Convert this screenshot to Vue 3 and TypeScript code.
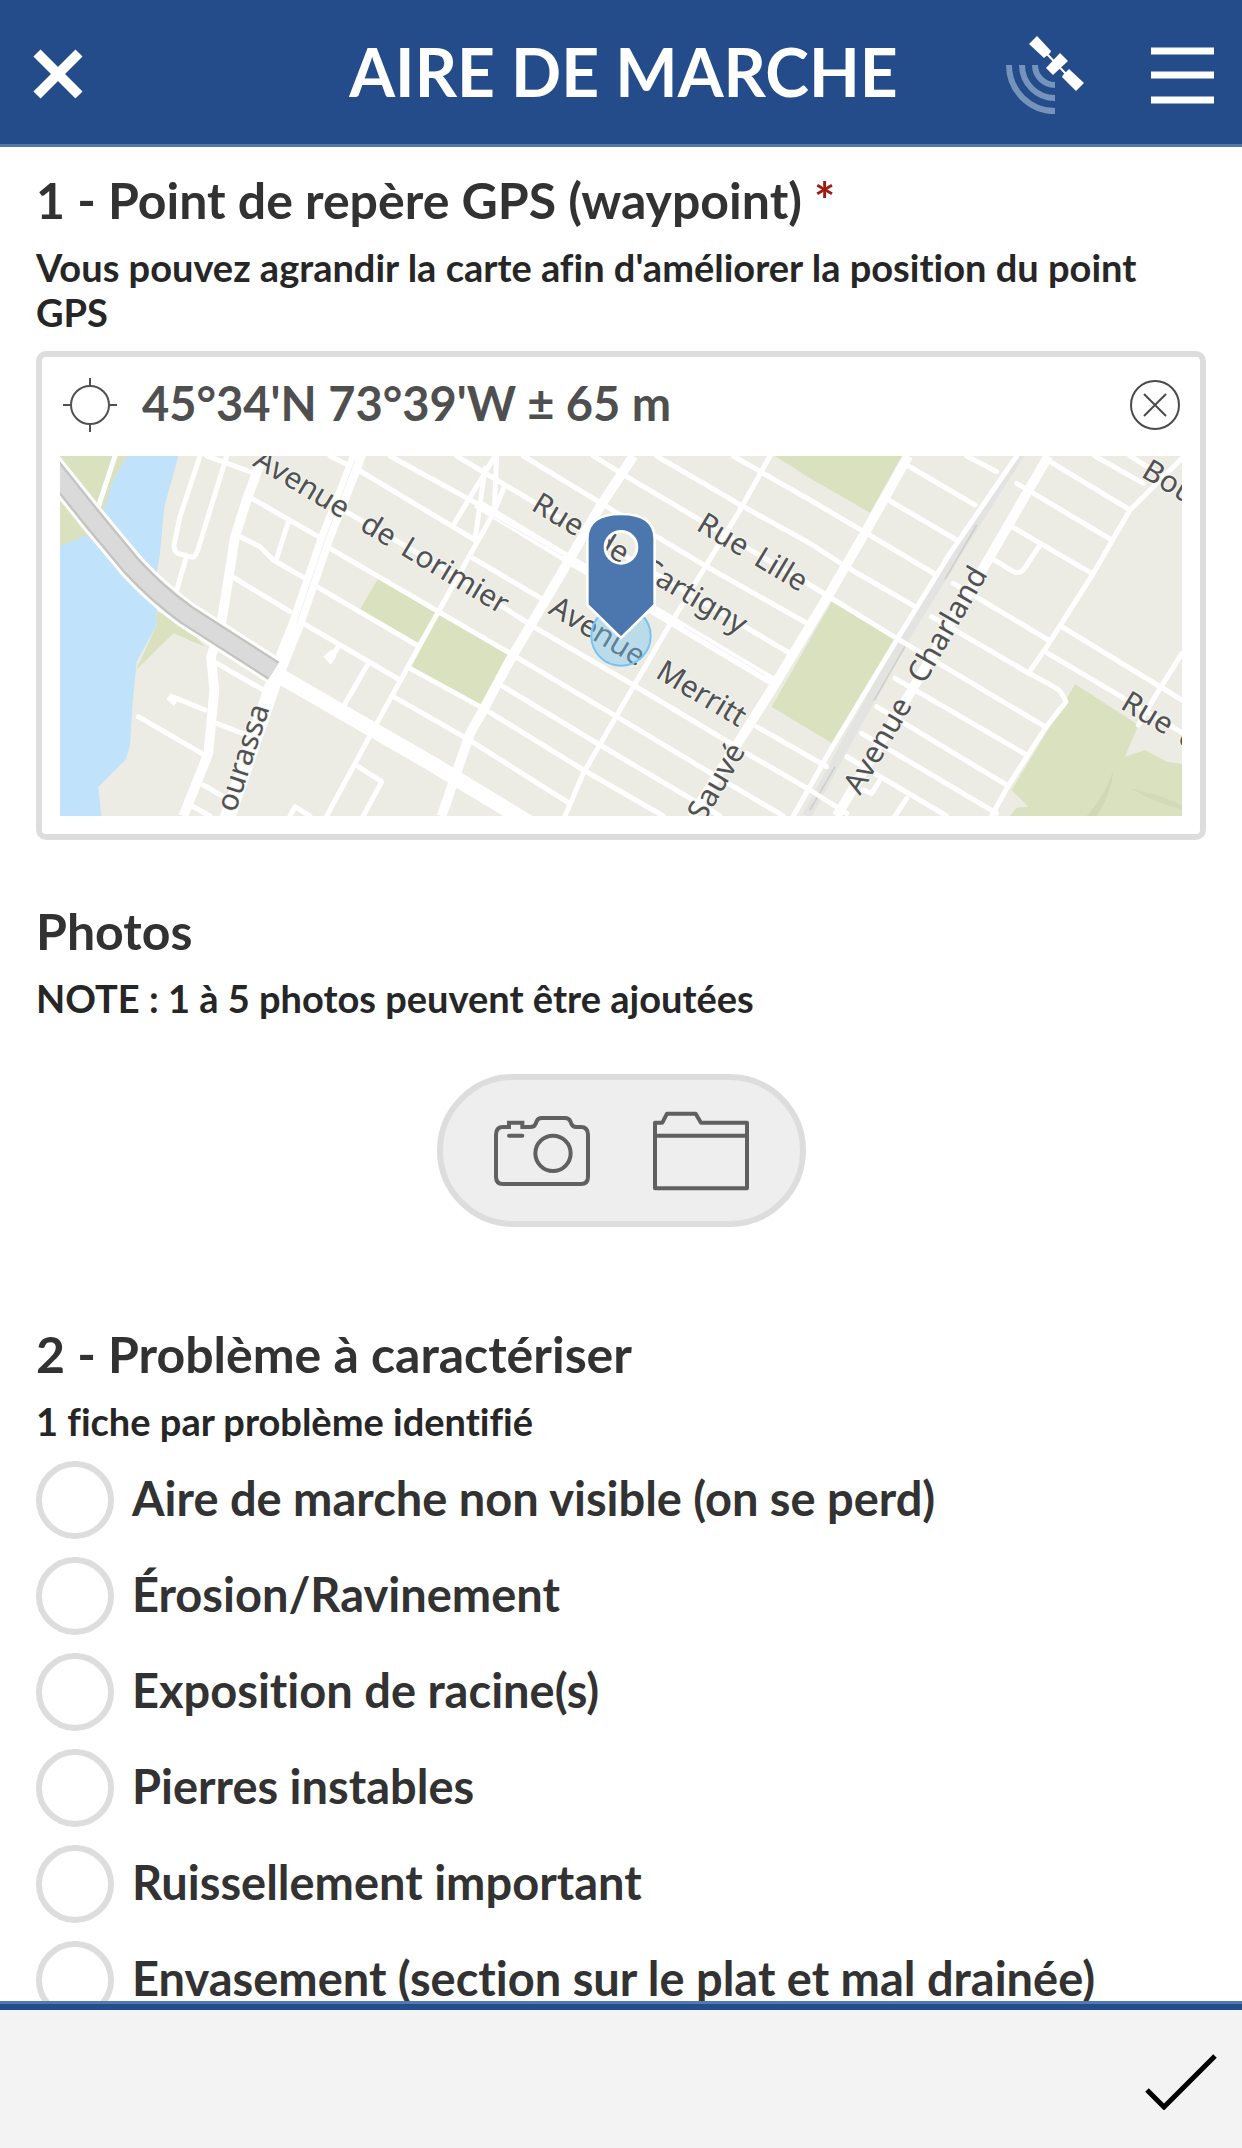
<script setup lang="ts">
import { ref } from 'vue'

interface Word {
  text: string
  at: number
}

interface Label {
  words: Word[]
  x: number
  y: number
  angle: number
}

const problem = ref('')

const problems: string[] = [
  'Aire de marche non visible (on se perd)',
  'Érosion/Ravinement',
  'Exposition de racine(s)',
  'Pierres instables',
  'Ruissellement important',
  'Envasement (section sur le plat et mal drainée)',
]

const parks: string[] = [
  'M90,348 L290,348 L250,420 L218,520 L260,600 L290,710 L190,606 L170,585 L90,618Z',
  'M380,815 L380,855 L318,990 L430,880 L525,920 L440,830Z',
  'M1045,715 L1220,820 L1160,912 L990,808Z',
  'M1225,825 L1435,940 L1350,1095 L1145,980Z',
  'M2235,348 L2615,348 L2520,518 L2340,415Z',
  'M2405,785 L2598,900 L2415,1215 L2225,1100Z',
  'M3135,1032 L3325,1155 L3285,1250 L3345,1230 L3410,1265 L3456,1272 L3456,1428 L2940,1428 L2960,1403 L2995,1400 L2945,1350 L3105,1085Z',
]

const streets: string[] = [
  'M255,348 L205,500',
  'M510,348 L450,530 L432,615 Q432,640 450,642 L488,652 Q498,650 505,625 L590,348',
  'M468,655 L440,750',
  'M530,348 L660,395',
  'M665,475 L865,590',
  'M775,545 L740,655',
  'M630,590 L690,620 L730,660 L820,712',
  'M610,712 L780,815',
  'M900,625 L1440,940 L1760,1130 L2060,1310 L2260,1428',
  'M860,740 L1160,915',
  'M820,850 L1110,1020',
  'M1140,985 L1360,1105 L1660,1290 L1900,1428',
  'M1090,1070 L1310,1195 L1610,1385',
  'M905,490 L1225,675 L1510,860 L1810,1035 L2110,1215',
  'M985,390 L1335,600',
  'M1330,655 L1550,785',
  'M900,348 L960,378',
  'M1080,348 L1340,490',
  'M1420,1040 L1710,1215 L2070,1428',
  'M1280,348 L1610,545 L2280,940',
  'M1480,348 L1730,500 L2030,680 L2340,855',
  'M1690,348 L1790,410 L2340,735 L2600,895 L3045,1160',
  'M1880,348 L2140,500 L2340,610 L2440,675 L2655,800',
  'M2110,348 L2200,400 L2340,480 L2510,580 L2720,705',
  'M2575,480 L2780,600',
  'M2630,375 L2835,495',
  'M2810,348 L2900,395',
  'M3060,365 L3300,510',
  'M2960,430 L3245,600',
  'M2945,560 L3185,700',
  'M2885,655 L2950,695 Q2975,705 2990,675 L3030,615',
  'M2770,730 L3055,900',
  'M2705,830 L2980,990 L3080,1045 Q3095,1055 3108,1085 L3045,1165 L2930,1345 L2885,1428',
  'M2595,1015 L2990,1245',
  'M2540,1100 L2930,1335',
  'M2495,1180 L2900,1420',
  'M2450,1250 L2750,1428',
  'M2550,1320 L2525,1360 L2500,1350',
  'M2630,1375 L2595,1428',
  'M3195,348 L3340,430',
  'M3300,348 L3400,410',
  'M3095,860 L3456,1080',
  'M3045,935 L3456,1178',
  'M3456,355 L3300,510 L3190,700 L3050,920 L2995,1000',
  'M3456,940 L3390,1045 L3325,1155',
  'M2180,1160 L2390,1280',
  'M2150,1240 L2340,1350 L2450,1420',
  'M2220,348 L2130,510 L2020,690 L1910,870 L1810,1040 L1660,1300 L1605,1428',
  'M1425,435 L1390,520 L1320,645 L1225,815 L1200,860 L1040,1150 L890,1428',
  'M1395,348 L1270,555',
  'M1365,385 L1335,600',
  'M1400,348 L1393,510',
  'M440,1075 L525,1110',
  'M325,1130 L515,1240',
  'M560,970 L700,1050',
  'M560,1150 L650,1185',
  'M520,1335 L580,1370',
  'M490,1400 L540,1428',
  'M925,920 L902,955',
  'M1015,970 L940,1100',
  'M985,1280 L1055,1325 L1000,1428',
  'M780,1428 L795,1400 L840,1428',
  'M2960,348 L2760,640 L2600,900 L2410,1215 L2290,1428',
]

const avenues: string[] = [
  'M690,370 L650,480 L615,590 L590,750 L572,860 L543,950 L553,1050 L535,1240 L460,1428',
  'M1810,348 L1710,500 L1600,690 L1440,960 L1360,1110 L1320,1180 L1235,1428',
  'M2635,348 L2510,570 L2390,775 L2230,1040 L2120,1215 L1985,1428',
  'M3055,348 L2880,650 L2640,1060 L2420,1428',
  'M1340,490 L1620,660 L2230,1025',
]

// Each word carries its distance along the street from the label's start.
const labels: Label[] = [
  {
    words: [{ text: 'Avenue', at: 0 }, { text: 'de', at: 374 }, { text: 'Lorimier', at: 516 }],
    x: 665,
    y: 375,
    angle: 31,
  },
  {
    words: [{ text: 'Rue', at: 0 }, { text: 'de', at: 214 }, { text: 'Cartigny', at: 376 }],
    x: 1500,
    y: 508,
    angle: 31,
  },
  { words: [{ text: 'Rue', at: 0 }, { text: 'Lille', at: 200 }], x: 1995, y: 568, angle: 31 },
  { words: [{ text: 'Avenue', at: 0 }, { text: 'Merritt', at: 374 }], x: 1552, y: 818, angle: 31 },
  { words: [{ text: 'Avenue', at: 0 }, { text: 'Charland', at: 384 }], x: 2490, y: 1368, angle: -60 },
  { words: [{ text: 'ourassa', at: 0 }], x: 616, y: 1420, angle: -72 },
  { words: [{ text: 'Sauvé', at: 0 }], x: 2022, y: 1450, angle: -60 },
  { words: [{ text: 'Bou', at: 0 }], x: 3330, y: 408, angle: 31 },
  { words: [{ text: 'Rue', at: 0 }, { text: 'd', at: 200 }], x: 3268, y: 1103, angle: 31 },
]
</script>

<template>
  <div class="app">
    <header class="topbar">
      <button class="icon-button" type="button" aria-label="Fermer">
        <svg width="50" height="50" viewBox="0 0 50 50">
          <path d="M4 4 L46 46 M46 4 L4 46" stroke="#fff" stroke-width="10" fill="none" />
        </svg>
      </button>
      <h1 class="title">AIRE DE MARCHE</h1>
      <div class="tools">
        <button class="icon-button" type="button" aria-label="État GPS">
          <svg width="80" height="80" viewBox="0 0 80 80">
            <g fill="none" stroke="#7693bb" stroke-width="6">
              <path d="M4 30 A46 46 0 0 0 50 76" />
              <path d="M17 30 A33 33 0 0 0 50 63" />
              <path d="M30 30 A20 20 0 0 0 50 50" />
            </g>
            <g fill="#fff">
              <path d="M32 1 L46 16 L45 18 L39 23 L24 9Z" />
              <path d="M55 18 L63 26 L48 40 L41 33Z" />
              <path d="M64 34 L79 48 L71 56 L57 42 L58 40Z" />
            </g>
            <path d="M41 18 L62 40" stroke="#fff" stroke-width="2" />
          </svg>
        </button>
        <button class="icon-button" type="button" aria-label="Menu">
          <svg width="63" height="57" viewBox="0 0 63 57">
            <path d="M0 4 H63 M0 28 H63 M0 53 H63" stroke="#fff" stroke-width="7" />
          </svg>
        </button>
      </div>
    </header>

    <main class="form">
      <section class="question">
        <h2>1 - Point de repère GPS (waypoint) <span class="required">*</span></h2>
        <p class="hint">Vous pouvez agrandir la carte afin d'améliorer la position du point GPS</p>
        <div class="geo">
          <div class="geo-bar">
            <svg class="target" width="56" height="56" viewBox="0 0 56 56" fill="none" stroke="#505050" stroke-width="2">
              <circle cx="28" cy="28" r="19" />
              <path d="M28 1 V9 M28 47 V55 M1 28 H9 M47 28 H55" />
            </svg>
            <output class="coords">45°34'N 73°39'W ± 65 m</output>
            <button class="icon-button" type="button" aria-label="Effacer la position">
              <svg width="50" height="50" viewBox="0 0 50 50" fill="none" stroke="#4a4a4a" stroke-width="2">
                <circle cx="25" cy="25" r="24" />
                <path d="M14 14 L36 36 M36 14 L14 36" />
              </svg>
            </button>
          </div>
          <svg class="map" viewBox="90 348 3366 1080" preserveAspectRatio="xMidYMid slice" role="img" aria-label="Carte">
            <rect x="90" y="348" width="3366" height="1080" fill="#ecece4" />
            <path
              d="M290,348 L445,348 L403,500 L390,640 L380,700 L380,855 L320,965 L308,1090 L300,1215 L288,1258 L205,1340 L214,1428 L90,1428 L90,600 L215,520 L250,420Z"
              fill="#c0e3fb"
            />
            <path v-for="d in parks" :key="d" :d="d" fill="#d9e1bf" />
            <path d="M3250,1290 Q3245,1360 3200,1428 L3170,1428 Q3225,1370 3250,1290Z" fill="#d0d8b7" />
            <path d="M3300,1345 Q3370,1385 3456,1410 L3456,1396 Q3380,1360 3300,1345Z" fill="#d2dab9" />
            <path
              d="M2985,318 L2780,640 L2620,900 L2470,1170 L2330,1428"
              fill="none"
              stroke="#e3e3e2"
              stroke-width="28"
            />
            <path
              d="M2840,555 L2745,718 M2625,920 L2532,1082 M2415,1280 L2340,1410 M2965,348 L2955,358"
              fill="none"
              stroke="#d0cfcb"
              stroke-width="5"
            />
            <g fill="none" stroke="#fff" stroke-linejoin="round">
              <path v-for="d in streets" :key="d" :d="d" stroke-width="15" stroke-linecap="round" />
              <path v-for="d in avenues" :key="d" :d="d" stroke-width="29" />
              <path d="M990,330 L960,410 L885,600 L800,850 L740,1000 L590,1440" stroke-width="46" />
              <path d="M735,1000 L1200,1268 L1500,1450" stroke-width="46" />
            </g>
            <path d="M880,950 L905,928 L920,948 L902,974Z M410,1078 L422,1060 L450,1072 L432,1098Z" fill="#fff" />
            <path
              d="M975,360 L885,600 L800,850 M1390,530 L1600,648 M1960,860 L2210,1010"
              fill="none"
              stroke="#f1f1f1"
              stroke-width="3"
            />
            <g fill="none">
              <path d="M50,365 L190,540 L305,678 Q380,760 470,825 L728,990" stroke="#fff" stroke-width="82" />
              <path d="M50,365 L190,540 L305,678 Q380,760 470,825 L731,992" stroke="#c3c3c0" stroke-width="64" />
              <path d="M50,365 L190,540 L305,678 Q380,760 470,825 L731,992" stroke="#dadada" stroke-width="50" />
            </g>

            <text
              v-for="label in labels"
              :key="`${label.x}-${label.y}`"
              class="map-label"
              :transform="`translate(${label.x} ${label.y}) rotate(${label.angle})`"
            ><tspan v-for="word in label.words" :key="word.text" :x="word.at">{{ word.text + ' ' }}</tspan></text>

            <circle cx="1773" cy="888" r="89" fill="#75c4f3" fill-opacity="0.42" stroke="#79c3f1" stroke-width="6" />
            <path
              d="M1672,596 C1672,545 1712,522 1773,522 C1834,522 1874,545 1874,596 V795 L1773,894 L1672,795Z M1773,574 a48,48 0 1 0 0,96 a48,48 0 1 0 0,-96Z"
              fill="#4b76ae"
              fill-rule="evenodd"
              stroke="#fff"
              stroke-width="8"
            />
          </svg>
        </div>
      </section>

      <section class="question photos">
        <h2>Photos</h2>
        <p class="hint">NOTE : 1 à 5 photos peuvent être ajoutées</p>
        <div class="capture">
          <button class="icon-button" type="button" aria-label="Prendre une photo">
            <svg width="96" height="96" viewBox="225 157 288 288" fill="none" stroke="#606060" stroke-width="12">
              <path
                d="M270,229 H252 Q231,229 231,252 V378 Q231,400 252,400 H485 Q507,400 507,378 V252 Q507,229 485,229 H472 Q460,229 457,219 L454,212 Q450,202 438,202 H368 Q356,202 353,212 L350,219 Q346,229 334,229 H310 V216 H270Z"
              />
              <path d="M270,255 H310" stroke-linecap="round" />
              <circle cx="402" cy="308" r="53" />
            </svg>
          </button>
          <button class="icon-button" type="button" aria-label="Choisir un fichier">
            <svg width="96" height="96" viewBox="702 157 288 288" fill="none" stroke="#606060" stroke-width="12" stroke-linejoin="round">
              <path d="M708,216 H730 L744,189 H830 L846,216 H984 V413 H708Z M708,255 H984" />
            </svg>
          </button>
        </div>
      </section>

      <section class="question problems">
        <h2>2 - Problème à caractériser</h2>
        <p class="hint">1 fiche par problème identifié</p>
        <div class="choices" role="radiogroup" aria-label="Problème à caractériser">
          <label v-for="item in problems" :key="item" class="choice">
            <input v-model="problem" type="radio" name="problem" :value="item" />
            <span>{{ item }}</span>
          </label>
        </div>
      </section>
    </main>

    <footer class="bottombar">
      <button class="icon-button" type="button" aria-label="Valider">
        <svg width="72" height="56" viewBox="0 0 72 56">
          <path d="M2 36 L19 53 L70 2" fill="none" stroke="#000" stroke-width="5" />
        </svg>
      </button>
    </footer>
  </div>
</template>

<style>
body {
  margin: 0;
}
</style>

<style scoped>
.app {
  display: flex;
  flex-direction: column;
  height: 100vh;
  background: #fff;
  color: #323232;
  font-family: Lato, "Open Sans", sans-serif;
  font-weight: 700;
  font-variant-ligatures: none;
}

.icon-button {
  display: block;
  padding: 0;
  border: 0;
  background: none;
  cursor: pointer;
}

.icon-button svg {
  display: block;
}

.topbar {
  display: grid;
  grid-template-columns: 1fr auto 1fr;
  align-items: center;
  flex: none;
  box-sizing: border-box;
  height: 147px;
  padding: 3px 28px 0 33px;
  border-bottom: 3px solid #5677a9;
  background: #244c8b;
}

.title {
  margin: 0;
  padding-bottom: 4px;
  color: #fff;
  font-size: 66px;
  line-height: 80px;
  font-weight: 700;
}

.tools {
  display: flex;
  align-items: center;
  justify-content: flex-end;
  gap: 66px;
  padding-top: 3px;
}

.form {
  flex: 1;
  min-height: 0;
  overflow-y: auto;
  scrollbar-width: none;
  padding: 23px 36px 0;
}

h2 {
  margin: 0;
  font-size: 50px;
  line-height: 60px;
  font-weight: 700;
}

.required {
  color: #9c1c12;
}

.hint {
  margin: 15px 0 0;
  color: #262626;
  font-size: 38px;
  line-height: 45px;
}

.geo {
  margin-top: 16px;
  padding: 0 18px 18px;
  border: 6px solid #ddd;
  border-radius: 10px;
}

.geo-bar {
  display: flex;
  align-items: center;
  gap: 24px;
  box-sizing: border-box;
  height: 99px;
  padding: 0 2px 4px;
}

.target {
  flex: none;
}

.coords {
  flex: 1;
  padding-bottom: 4px;
  color: #4f4f4f;
  font-size: 47px;
  line-height: 60px;
}

.map {
  display: block;
  width: 100%;
  height: 360px;
}

.map-label {
  font-family: "Noto Sans", sans-serif;
  font-size: 90px;
  font-weight: 400;
  fill: #505152;
  stroke: #f4f4ef;
  stroke-width: 6px;
  paint-order: stroke;
}

.photos {
  margin-top: 61px;
}

.capture {
  display: flex;
  align-items: center;
  justify-content: center;
  gap: 63px;
  box-sizing: border-box;
  width: fit-content;
  height: 153px;
  margin: 53px auto 0;
  padding: 0 51px;
  border: 6px solid #ddd;
  border-radius: 77px;
  background: #eee;
}

.problems {
  margin-top: 97px;
}

.choices {
  display: flex;
  flex-direction: column;
  gap: 18px;
  margin-top: 17px;
}

.choice {
  display: flex;
  align-items: center;
  gap: 18px;
  font-size: 47px;
  line-height: 60px;
  white-space: nowrap;
}

.choice span {
  padding-bottom: 4px;
}

.choice input {
  appearance: none;
  flex: none;
  box-sizing: border-box;
  width: 78px;
  height: 78px;
  margin: 0;
  border: 6px solid #ddd;
  border-radius: 50%;
  background: #fff;
}

.choice input:checked {
  border-color: #244c8b;
}

.bottombar {
  display: flex;
  align-items: center;
  justify-content: flex-end;
  flex: none;
  box-sizing: border-box;
  height: 147px;
  padding: 12px 25px 0;
  border-top: 3px solid #5579ac;
  background: #f3f3f3;
  box-shadow: inset 0 6px #234d8f;
}
</style>
